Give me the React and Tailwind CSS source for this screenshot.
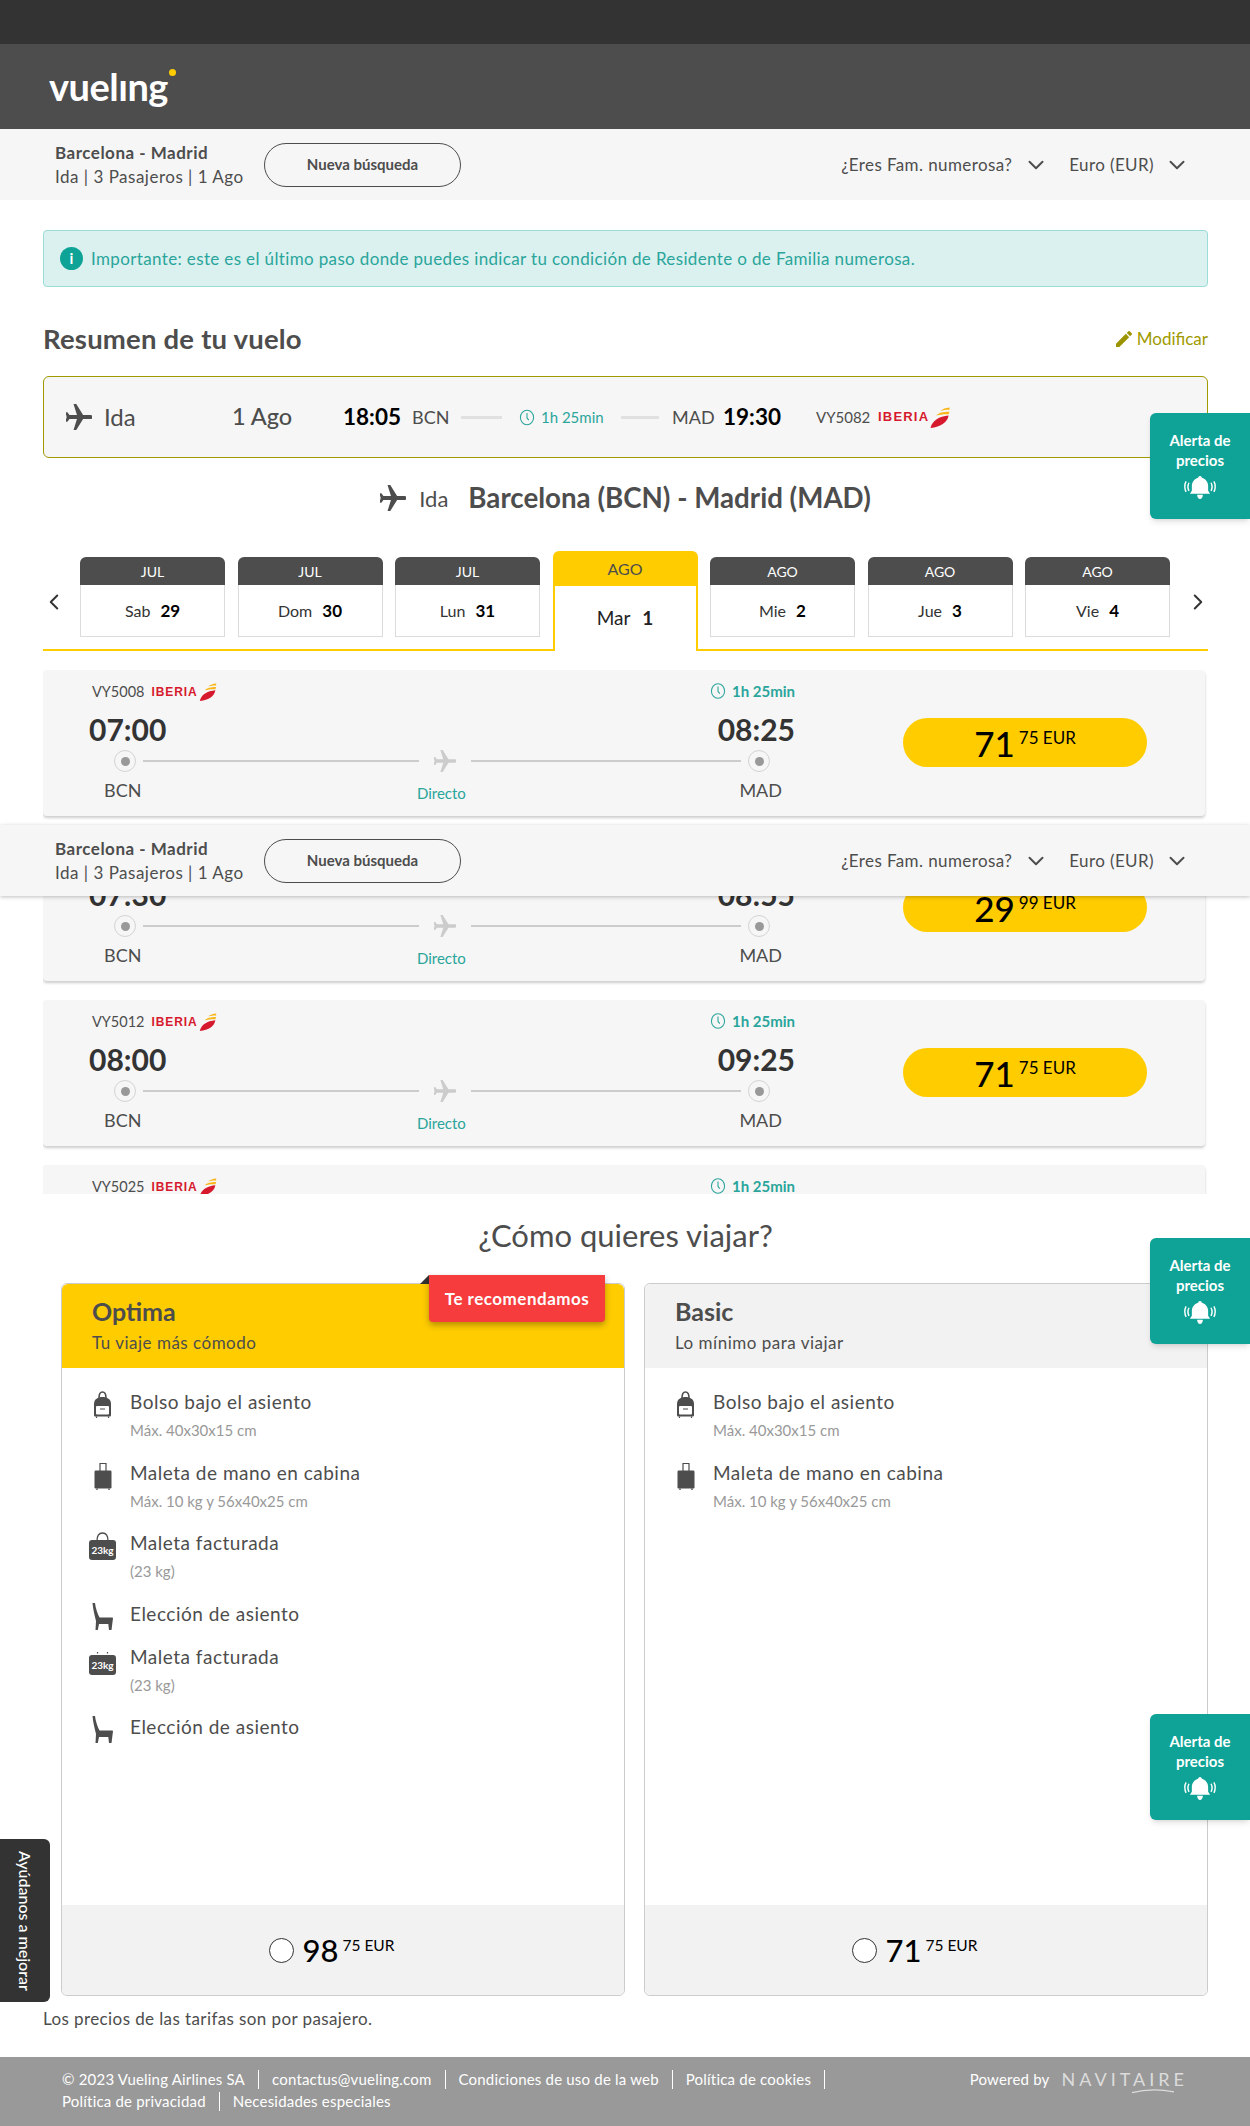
import React from "react";
import { ChevronDown, ChevronLeft, ChevronRight } from "lucide-react";

const PLANE = "M21 16v-2l-8-5V3.5c0-.83-.67-1.5-1.5-1.5S10 2.67 10 3.5V9l-8 5v2l8-2.5V19l-2 1.5V22l3.5-1 3.5 1v-1.5L13 19v-5.5l8 2.5z";

function Plane({ className }) {
  return (
    <svg viewBox="2 2 19 20" className={className} fill="currentColor">
      <path d={PLANE} transform="rotate(90 11.5 12)" />
    </svg>
  );
}

function Clock({ className }) {
  return (
    <svg viewBox="0 0 18 20" className={className} fill="none" stroke="#2aa59b" strokeWidth="1.2">
      <ellipse cx="9" cy="10" rx="7.4" ry="8.2" />
      <path d="M9 5v5.5l2 2.5" />
    </svg>
  );
}

function Iberia({ big }) {
  return (
    <span className="inline-flex items-center">
      <span
        className={
          big
            ? "font-['Liberation_Sans'] font-bold text-[13px] tracking-[1.2px] text-[#d7192d]"
            : "font-['Liberation_Sans'] font-bold text-[12px] tracking-[0.9px] text-[#d7192d]"
        }
      >
        IBERIA
      </span>
      <svg viewBox="0 0 20 22" className={big ? "w-[22px] h-[21px]" : "w-[20px] h-[18px]"}>
        <path d="M0 22 C2 14 9 10 19 9 C18 16 11 21 0 22Z" fill="#d7192d" />
        <path d="M6 9 C9 6 13 5 20 5 L19 7.6 C14 7.4 10 8 6 9Z" fill="#fbb516" />
        <path d="M10 4.4 C13 2 16 1 20 0.6 L20 3 C16 3 13 3.4 10 4.4Z" fill="#fbb516" />
      </svg>
    </span>
  );
}

function Bell() {
  return (
    <svg viewBox="0 0 32 24" className="w-[32px] h-[23px] mx-auto" fill="white">
      <path d="M16 0c1.100 0 1.800.8 1.900 1.800C22 3 24.500 6.400 24.500 10.500v5l2 3h-21l2-3v-5C7.500 6.400 10 3 14.100 1.800 14.200.8 14.900 0 16 0z" />
      <path d="M13 19.500h6C18.900 22 17.700 24 16 24s-2.900-2-3-4.500z" />
      <path d="M4.500 7c-1.300 2.500-1.300 6 0 8.500M1.500 5.500c-1.800 3-1.800 8 0 11M27.500 7c1.300 2.500 1.300 6 0 8.500M30.500 5.500c1.800 3 1.800 8 0 11" fill="none" stroke="white" strokeWidth="1.500" />
    </svg>
  );
}

function AlertPrice({ top }) {
  return (
    <div className={`absolute right-0 w-[100px] h-[106px] ${top} bg-[#0ea396] rounded-l-md shadow-md text-white text-center pt-[17px]`}>
      <div className="text-[15px] leading-[20px] font-bold">Alerta de<br />precios</div>
      <div className="mt-[6px]"><Bell /></div>
    </div>
  );
}

function SubBar({ className }) {
  return (
    <div className={`h-[71px] bg-[#f6f6f6] flex items-center pl-[55px] pr-[60px] ${className}`}>
      <div className="w-[209px]">
        <div className="text-[17px] leading-[24px] tracking-[0.5px] font-bold text-[#4d4d4d]">Barcelona - Madrid</div>
        <div className="text-[17px] leading-[24px] tracking-[0.5px] text-[#4d4d4d]">Ida | 3 Pasajeros | 1 Ago</div>
      </div>
      <div className="w-[197px] h-[44px] rounded-full border border-[#4d4d4d] flex items-center justify-center text-[15px] font-bold text-[#4d4d4d]">
        Nueva búsqueda
      </div>
      <div className="ml-auto flex items-center text-[17px] tracking-[0.4px] text-[#4d4d4d]">
        <span>¿Eres Fam. numerosa?</span>
        <ChevronDown className="w-[26px] h-[26px] ml-[11px] mr-[20px]" strokeWidth={1.8} />
        <span>Euro (EUR)</span>
        <ChevronDown className="w-[26px] h-[26px] ml-[10px]" strokeWidth={1.8} />
      </div>
    </div>
  );
}

function DayTab({ month, day, num }) {
  return (
    <div className="w-[145px] shrink-0 mt-[6px]">
      <div className="h-[28px] bg-[#4d4d4d] rounded-t-md text-white text-[14px] flex items-center justify-center">{month}</div>
      <div className="h-[52px] border border-t-0 border-[#dcdcdc] bg-white flex items-center justify-center gap-[10px] text-[16px] text-[#333]">
        <span>{day}</span>
        <span className="font-bold text-[17px] text-black">{num}</span>
      </div>
    </div>
  );
}

function Dot() {
  return (
    <span className="w-[22px] h-[22px] shrink-0 rounded-full border border-[#d4d4d4] flex items-center justify-center">
      <span className="w-[9px] h-[9px] rounded-full bg-[#999]" />
    </span>
  );
}

function Price({ whole, cents, small }) {
  return (
    <span className="inline-flex items-start text-black">
      <span className={`${small ? "text-[31px]" : "text-[35px]"} leading-[36px] font-medium`}>{whole}</span>
      <span className={`${small ? "text-[15.500px]" : "text-[17px]"} leading-[20px] ml-[4px] mt-[3px]`}>{cents} EUR</span>
    </span>
  );
}

function Flight({ code, from, to, whole, cents }) {
  return (
    <div className="w-[1162px] h-[146px] mb-[19px] bg-[#f6f6f6] rounded shadow-[0_2px_3px_rgba(0,0,0,0.2)] flex pl-[46px] shrink-0">
      <div className="w-[706px] pt-[10px]">
        <div className="h-[22px] flex items-center justify-between">
          <div className="flex items-center gap-[7px] pl-[3px] mt-[2px] text-[14.500px] text-[#4d4d4d]">
            <span>{code}</span>
            <Iberia />
          </div>
          <div className="flex items-center gap-[6px] text-[15px] font-bold text-[#2aa59b]">
            <Clock className="w-[16px] h-[18px]" />
            <span>1h 25min</span>
          </div>
        </div>
        <div className="h-[36px] mt-[9px] flex items-center justify-between text-[30px] font-bold text-[#333]">
          <span>{from}</span>
          <span>{to}</span>
        </div>
        <div className="h-[24px] mt-[2px] flex items-center pl-[25px] pr-[25px]">
          <Dot />
          <span className="ml-[7px] w-[276px] h-[2px] bg-[#ccc]" />
          <Plane className="w-[22px] h-[24px] mx-[15px] text-[#ccc]" />
          <span className="w-[270px] h-[2px] bg-[#ccc] mr-[7px]" />
          <Dot />
        </div>
        <div className="h-[24px] mt-[5px] flex items-center justify-between pl-[15px] pr-[13px] text-[18px] text-[#4d4d4d]">
          <span>BCN</span>
          <span className="text-[15px] text-[#2aa59b] mt-[6px] ml-[2px]">Directo</span>
          <span>MAD</span>
        </div>
      </div>
      <div className="ml-[108px] mt-[48px] w-[244px] h-[49px] rounded-full bg-[#ffcc00] flex items-center justify-center">
        <Price whole={whole} cents={cents} />
      </div>
    </div>
  );
}

function Backpack() {
  return (
    <svg viewBox="0 0 19 27" className="w-[19px] h-[27px] shrink-0">
      <path d="M6 7 C6 3 7 1 9.500 1 S13 3 13 7" fill="none" stroke="#4d4d4d" strokeWidth="1.600" />
      <path d="M1 13c0-5 4-7 8.500-7S18 8 18 13v11c0 1-.6 1.500-1.500 1.500h-14C1.600 25.500 1 25 1 24z" fill="#4d4d4d" />
      <rect x="3" y="15" width="13" height="8.500" rx="1" fill="white" />
      <path d="M7 18h5" stroke="#4d4d4d" strokeWidth="1" />
      <path d="M3.500 25.500v1.500M15.500 25.500v1.500" stroke="#4d4d4d" strokeWidth="1.200" />
    </svg>
  );
}

function Suitcase() {
  return (
    <svg viewBox="0 0 18 28" className="w-[18px] h-[28px] shrink-0">
      <path d="M6 9V1.500h6V9" fill="none" stroke="#4d4d4d" strokeWidth="1.200" />
      <rect x="0.500" y="8.500" width="17" height="18" rx="1.200" fill="#4d4d4d" />
      <path d="M3 26.500v1.500M15 26.500v1.500" stroke="#4d4d4d" strokeWidth="1.400" />
    </svg>
  );
}

function Weight({ clipped }) {
  return (
    <span className={`relative w-[27px] shrink-0 ${clipped ? "h-[23px] mt-[6px]" : "h-[28px]"}`}>
      {clipped ? (
        <svg viewBox="0 0 27 3" className="absolute top-0 left-0 w-[27px] h-[3px]">
          <path d="M8.500 0v1.500M18.500 0v1.500" stroke="#4d4d4d" strokeWidth="1.200" />
        </svg>
      ) : (
        <svg viewBox="0 0 27 9" className="absolute top-0 left-0 w-[27px] h-[9px]">
          <path d="M8 9C8 3 10 1 13.500 1S19 3 19 9" fill="none" stroke="#4d4d4d" strokeWidth="1.300" />
        </svg>
      )}
      <span className="absolute left-0 bottom-0 w-[27px] h-[20px] rounded-[3px] bg-[#4d4d4d] text-white text-[10px] font-bold flex items-center justify-center">23kg</span>
    </span>
  );
}

function Seat() {
  return (
    <svg viewBox="0 0 21 27" className="w-[21px] h-[27px] shrink-0" fill="#4d4d4d">
      <path d="M0.500 0L3 0C3.600 5 5.500 11 7.500 14.500L20 14.500C20.600 14.500 21 15 21 15.500L20.500 19L19.500 27H17L16.300 21H7L5.800 27H3.500L4 18C2.500 12 1 6 0.500 0Z" />
    </svg>
  );
}

function Item({ icon, title, sub, className }) {
  return (
    <div className={`flex ${className}`}>
      <div className="w-[21px] mr-[17px] flex justify-center items-start pt-[2px] shrink-0">{icon}</div>
      <div>
        <div className="text-[19px] leading-[26px] tracking-[0.5px] text-[#4d4d4d]">{title}</div>
        {sub && <div className="text-[15px] leading-[20px] mt-[5px] text-[#999]">{sub}</div>}
      </div>
    </div>
  );
}

function Fare({ name, desc, head, whole, cents, children }) {
  return (
    <div className="relative w-[564px] h-[713px] border border-[#ccc] rounded-md flex flex-col">
      <div className={`h-[84px] ${head} rounded-t-md pl-[30px] pt-[11px] shrink-0`}>
        <div className="text-[25px] leading-[32px] font-bold text-[#4d4d4d]">{name}</div>
        <div className="text-[17px] leading-[24px] tracking-[0.5px] mt-[4px] text-[#4d4d4d]">{desc}</div>
      </div>
      <div className="flex-1 pl-[30px] pt-[21px]">{children}</div>
      <div className="h-[90px] bg-[#f2f2f2] rounded-b-md flex items-center justify-center gap-[9px] pr-[23px] shrink-0">
        <span className="w-[25px] h-[25px] rounded-full border border-[#333] bg-white shrink-0" />
        <Price small whole={whole} cents={cents} />
      </div>
    </div>
  );
}

export default function App() {
  const days = [
    ["JUL", "Sab", "29"],
    ["JUL", "Dom", "30"],
    ["JUL", "Lun", "31"],
  ];
  const days2 = [
    ["AGO", "Mie", "2"],
    ["AGO", "Jue", "3"],
    ["AGO", "Vie", "4"],
  ];
  return (
    <div className="relative h-[2126px] w-[1250px] overflow-hidden bg-white font-['Lato',sans-serif] text-[#4d4d4d]">
      <div className="h-[44px] bg-[#333]" />
      <div className="h-[85px] bg-[#4d4d4d] pl-[49px] flex items-start">
        <span className="relative text-[38px] leading-[50px] mt-[17px] font-bold text-white tracking-[-0.5px]">
          vuelıng
          <span className="absolute right-[-8px] top-[8px] w-[7px] h-[7px] rounded-full bg-[#ffcc00]" />
        </span>
      </div>
      <SubBar />

      <div className="pl-[43px] pr-[42px]">
        <div className="mt-[30px] h-[57px] rounded border border-[#9adcd8] bg-[#dbf1ef] flex items-center pl-[16px] text-[17px] tracking-[0.36px] text-[#2aa59b]">
          <span className="w-[23px] h-[23px] rounded-full bg-[#0ea396] text-white text-[15px] font-bold flex items-center justify-center mr-[8px]">i</span>
          Importante: este es el último paso donde puedes indicar tu condición de Residente o de Familia numerosa.
        </div>

        <div className="mt-[35px] h-[34px] flex items-center justify-between">
          <span className="text-[27.500px] tracking-[0.2px] font-bold text-[#4d4d4d]">Resumen de tu vuelo</span>
          <span className="flex items-center gap-[5px] text-[17px] text-[#a09a00]">
            <svg viewBox="3 3 18 18" className="w-[16px] h-[16px]" fill="#9b9400">
              <path d="M3 17.250V21h3.750L17.810 9.940l-3.750-3.750L3 17.250zM20.710 7.040a1 1 0 0 0 0-1.410l-2.340-2.340a1 1 0 0 0-1.410 0l-1.830 1.830 3.750 3.750 1.830-1.830z" />
            </svg>
            Modificar
          </span>
        </div>

        <div className="mt-[20px] h-[82px] rounded-md border border-[#a09a00] bg-[#f6f6f6] flex items-center pl-[22px]">
          <Plane className="w-[26px] h-[28px] mr-[12px] text-[#4d4d4d]" />
          <span className="w-[128px] text-[24px]">Ida</span>
          <span className="w-[111px] text-[23.500px] font-medium">1 Ago</span>
          <span className="w-[69px] text-[22.500px] font-bold text-black">18:05</span>
          <span className="w-[49px] text-[18px]">BCN</span>
          <span className="w-[41px] h-[3px] bg-[#e0e0e0] mr-[17px]" />
          <span className="w-[22px]"><Clock className="w-[16px] h-[19px]" /></span>
          <span className="w-[80px] text-[15px] text-[#2aa59b]">1h 25min</span>
          <span className="w-[38px] h-[3px] bg-[#e0e0e0] mr-[13px]" />
          <span className="w-[51px] text-[18px]">MAD</span>
          <span className="w-[93px] text-[22.500px] font-bold text-black">19:30</span>
          <span className="w-[62px] text-[15px]">VY5082</span>
          <Iberia big />
        </div>

        <div className="mt-[20px] h-[40px] flex items-center justify-center">
          <Plane className="w-[26px] h-[28px] mr-[13px] text-[#4d4d4d]" />
          <span className="text-[22px] mr-[20px]">Ida</span>
          <span className="text-[27.700px] font-bold text-[#4d4d4d]">Barcelona (BCN) - Madrid (MAD)</span>
        </div>

        <div className="mt-[33px] h-[100px] border-b-2 border-[#ffcc00] flex items-start">
          <div className="w-[37px] h-[98px] flex items-start pt-[38px] -ml-[2px] mr-[2px] shrink-0">
            <ChevronLeft className="w-[26px] h-[26px] text-[#333]" strokeWidth={1.8} />
          </div>
          <div className="flex gap-[12.500px] items-start">
            {days.map((d) => (
              <DayTab key={d[2]} month={d[0]} day={d[1]} num={d[2]} />
            ))}
            <div className="w-[145px] h-[100px] shrink-0 relative z-10 flex flex-col">
              <div className="h-[35px] bg-[#ffcc00] rounded-t-md text-[16px] flex items-center justify-center text-[#4d4d4d] shrink-0">AGO</div>
              <div className="flex-1 bg-white border-x-2 border-[#ffcc00] flex items-center justify-center gap-[12px] text-[19px] text-[#222]">
                <span>Mar</span>
                <span className="font-bold">1</span>
              </div>
            </div>
            {days2.map((d) => (
              <DayTab key={d[2]} month={d[0]} day={d[1]} num={d[2]} />
            ))}
          </div>
          <div className="ml-[15px] pt-[38px] shrink-0">
            <ChevronRight className="w-[26px] h-[26px] text-[#333]" strokeWidth={1.8} />
          </div>
        </div>

        <div className="mt-[19px] h-[524px] overflow-hidden">
          <Flight code="VY5008" from="07:00" to="08:25" whole="71" cents="75" />
          <Flight code="VY5010" from="07:30" to="08:55" whole="29" cents="99" />
          <Flight code="VY5012" from="08:00" to="09:25" whole="71" cents="75" />
          <Flight code="VY5025" from="08:30" to="09:55" whole="71" cents="75" />
        </div>

        <div className="mt-[16px] h-[50px] flex items-center justify-center text-[31px] text-[#4d4d4d]">¿Cómo quieres viajar?</div>

        <div className="mt-[23px] ml-[18px] flex gap-[19px]">
          <Fare name="Optima" desc="Tu viaje más cómodo" head="bg-[#ffcc00]" whole="98" cents="75">
            <svg viewBox="0 0 9 9" className="absolute left-[358px] top-[-9px] w-[9px] h-[9px]">
              <path d="M9 0V9H0Z" fill="#333" />
            </svg>
            <div className="absolute left-[367px] top-[-9px] w-[176px] h-[47px] bg-[#f63c3c] rounded-b shadow-[0_3px_6px_rgba(0,0,0,0.3)] text-white text-[17px] tracking-[0.5px] font-bold flex items-center justify-center">
              Te recomendamos
            </div>
            <Item className="h-[70.500px]" icon={<Backpack />} title="Bolso bajo el asiento" sub="Máx. 40x30x15 cm" />
            <Item className="h-[70.500px]" icon={<Suitcase />} title="Maleta de mano en cabina" sub="Máx. 10 kg y 56x40x25 cm" />
            <Item className="h-[70.500px]" icon={<Weight />} title="Maleta facturada" sub="(23 kg)" />
            <Item className="h-[43.500px]" icon={<Seat />} title="Elección de asiento" />
            <Item className="h-[70px]" icon={<Weight clipped />} title="Maleta facturada" sub="(23 kg)" />
            <Item className="h-[43px]" icon={<Seat />} title="Elección de asiento" />
          </Fare>
          <Fare name="Basic" desc="Lo mínimo para viajar" head="bg-[#f2f2f2]" whole="71" cents="75">
            <Item className="h-[70.500px]" icon={<Backpack />} title="Bolso bajo el asiento" sub="Máx. 40x30x15 cm" />
            <Item className="h-[70.500px]" icon={<Suitcase />} title="Maleta de mano en cabina" sub="Máx. 10 kg y 56x40x25 cm" />
          </Fare>
        </div>

        <div className="mt-[11px] h-[24px] text-[17px] tracking-[0.4px] leading-[24px] text-[#4d4d4d]">Los precios de las tarifas son por pasajero.</div>
      </div>

      <div className="mt-[26px] h-[69px] bg-[#999] flex justify-between pl-[62px] pr-[62px] pt-[11px] text-white text-[15px] tracking-[0.2px]">
        <div className="w-[800px] flex flex-wrap content-start">
          {["© 2023 Vueling Airlines SA", "contactus@vueling.com", "Condiciones de uso de la web", "Política de cookies", "Política de privacidad"].map((t) => (
            <span key={t} className="h-[19px] leading-[19px] my-[1.500px] pr-[13px] mr-[13px] border-r border-white">{t}</span>
          ))}
          <span className="h-[19px] leading-[19px] my-[1.500px]">Necesidades especiales</span>
        </div>
        <div className="flex items-start gap-[12px]">
          <span className="leading-[22px]">Powered by</span>
          <span className="relative text-[18px] leading-[22px] tracking-[4px] text-[#dcdcdc]">
            NAVITAIRE
            <svg viewBox="0 0 50 6" className="absolute left-[70px] top-[20px] w-[42px] h-[6px]">
              <path d="M0 5 C15 1 35 1 50 4" fill="none" stroke="#dcdcdc" strokeWidth="1.500" />
            </svg>
          </span>
        </div>
      </div>

      <SubBar className="absolute left-0 right-0 top-[825px] z-20 shadow-[0_1px_4px_rgba(0,0,0,0.25)]" />

      <AlertPrice top="top-[413px] z-30" />
      <AlertPrice top="top-[1238px] z-30" />
      <AlertPrice top="top-[1714px] z-30" />

      <div className="absolute left-0 top-[1839px] w-[50px] h-[163px] z-30 bg-[#333] rounded-r-md text-white text-[16px] font-medium flex items-center justify-center [writing-mode:vertical-rl]">
        Ayúdanos a mejorar
      </div>
    </div>
  );
}
